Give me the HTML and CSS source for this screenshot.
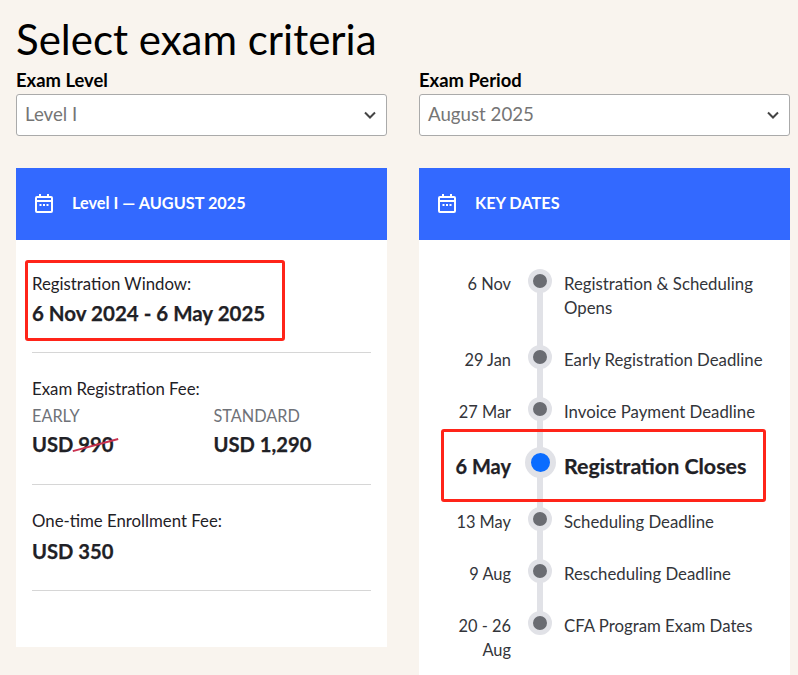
FILE: index.html
```html
<!DOCTYPE html>
<html lang="en">
<head>
<meta charset="utf-8">
<title>Select exam criteria</title>
<link rel="stylesheet" href="styles.css">
</head>
<body>
<main class="page">
  <h1 class="title">Select exam criteria</h1>
  <div class="columns">
    <div class="col">
      <div class="field">
        <div class="field-label">Exam Level</div>
        <div class="select"><span>Level I</span>
          <svg class="chevron" viewBox="0 0 12 8"><path d="M1 1.5 6 6.5 11 1.5"/></svg>
        </div>
      </div>
      <section class="card card-left">
        <header class="card-head">
          <svg class="cal" viewBox="0 0 20 20"><rect x="2" y="4" width="16" height="15" rx="1"/><path d="M2 8h16M6 1v3M14 1v3"/><path class="dots" d="M5.5 12h2M9 12h2M12.5 12h2"/></svg>
          <span>Level I — AUGUST 2025</span>
        </header>
        <div class="info info-first">
          <div class="info-label">Registration Window:</div>
          <div class="info-value">6 Nov 2024 - 6 May 2025</div>
        </div>
        <div class="info">
          <div class="info-label">Exam Registration Fee:</div>
          <div class="fees">
            <div>
              <div class="fee-kind">EARLY</div>
              <div class="info-value fee-value">USD <span class="struck">990</span></div>
            </div>
            <div>
              <div class="fee-kind">STANDARD</div>
              <div class="info-value fee-value">USD 1,290</div>
            </div>
          </div>
        </div>
        <div class="info">
          <div class="info-label">One-time Enrollment Fee:</div>
          <div class="info-value fee-total">USD 350</div>
        </div>
        <div class="mark mark-window"></div>
      </section>
    </div>
    <div class="col">
      <div class="field">
        <div class="field-label">Exam Period</div>
        <div class="select"><span>August 2025</span>
          <svg class="chevron" viewBox="0 0 12 8"><path d="M1 1.5 6 6.5 11 1.5"/></svg>
        </div>
      </div>
      <section class="card card-right">
        <header class="card-head">
          <svg class="cal" viewBox="0 0 20 20"><rect x="2" y="4" width="16" height="15" rx="1"/><path d="M2 8h16M6 1v3M14 1v3"/><path class="dots" d="M5.5 12h2M9 12h2M12.5 12h2"/></svg>
          <span>KEY DATES</span>
        </header>
        <ol class="timeline">
          <li class="row"><div class="date">6 Nov</div><div class="dot"></div><div class="what">Registration &amp; Scheduling Opens</div></li>
          <li class="row"><div class="date">29 Jan</div><div class="dot"></div><div class="what">Early Registration Deadline</div></li>
          <li class="row"><div class="date">27 Mar</div><div class="dot"></div><div class="what">Invoice Payment Deadline</div></li>
          <li class="row row-key"><div class="date">6 May</div><div class="dot"></div><div class="what">Registration Closes</div></li>
          <li class="row"><div class="date">13 May</div><div class="dot"></div><div class="what">Scheduling Deadline</div></li>
          <li class="row"><div class="date">9 Aug</div><div class="dot"></div><div class="what">Rescheduling Deadline</div></li>
          <li class="row"><div class="date">20 - 26 Aug</div><div class="dot"></div><div class="what">CFA Program Exam Dates</div></li>
        </ol>
        <div class="mark mark-closes"></div>
      </section>
    </div>
  </div>
</main>
</body>
</html>
```

FILE: styles.css
```css
* { box-sizing: border-box; }
html, body { margin: 0; height: 100%; }
body {
  background: #f9f4ee;
  color: #1f2126;
  font-family: Lato, "Open Sans", sans-serif;
  overflow: hidden;
}
.page { padding: 16px 8px 0 16px; }
.title {
  margin: 0;
  font-size: 42px;
  font-weight: 400;
  line-height: 46px;
  height: 48px;
  color: #000;
}
.columns {
  display: grid;
  grid-template-columns: 371px 371px;
  column-gap: 32px;
}
.field-label {
  font-size: 18.4px;
  font-weight: 700;
  line-height: 32px;
  height: 30px;
  color: #000;
}
.select {
  height: 42px;
  background: #fff;
  border: 1px solid #aaa;
  border-radius: 3px;
  padding: 0 10px 2px 8px;
  display: flex;
  align-items: center;
  justify-content: space-between;
  font-size: 18.7px;
  color: #757575;
}
.chevron { width: 12px; height: 8px; margin-top: 2px; fill: none; stroke: #444; stroke-width: 2; }
.card {
  position: relative;
  margin-top: 32px;
  background: #fff;
}
.card-left { height: 479px; }
.card-right { height: 520px; }
.card-head {
  height: 72px;
  background: #3369ff;
  color: #fff;
  display: flex;
  align-items: center;
  gap: 18px;
  padding-left: 18px;
  font-size: 16.3px;
  font-weight: 700;
}
.card-head span { margin-bottom: 3px; }
.cal { width: 20px; height: 20px; margin-bottom: 2px; fill: none; stroke: #fff; stroke-width: 2; }
.info {
  margin: 0 16px;
  padding: 24px 0 25px;
  border-bottom: 1px solid #d6d6d6;
}
.info-first { padding: 32px 0 24px; }
.info-label { font-size: 16.8px; line-height: 24px; }
.info-value { font-size: 20.5px; font-weight: 700; line-height: 30px; margin-top: 2px; -webkit-text-stroke: 0.25px currentColor; }
.fee-value { margin-top: 1px; font-size: 20.2px; }
.fee-total { font-size: 20.2px; margin-top: 3px; margin-bottom: -1px; }
.fees { display: grid; grid-template-columns: 181.5px 1fr; margin-top: 3px; }
.fee-kind { font-size: 16.3px; line-height: 24px; color: #6f7278; }
.struck { position: relative; }
.struck::after {
  content: "";
  position: absolute;
  left: -6px;
  right: -6px;
  top: 50%;
  height: 2px;
  background: #c9314f;
  transform: rotate(-15deg);
}
.mark {
  position: absolute;
  border: 3px solid #ff2419;
  border-radius: 3px;
  pointer-events: none;
}
.mark-window { left: 9px; top: 92px; width: 260px; height: 81px; }
.mark-closes { left: 22px; top: 261px; width: 325px; height: 73px; }
.timeline {
  position: relative;
  list-style: none;
  margin: 0;
  padding: 31px 16px 0 22px;
}
.timeline::before {
  content: "";
  position: absolute;
  left: 118px;
  top: 40px;
  height: 345px;
  width: 6px;
  background: #e1e2e7;
}
.row {
  position: relative;
  display: grid;
  grid-template-columns: 70px 53px 1fr;
  font-size: 16.4px;
  line-height: 24px;
  color: #33353a;
  margin-bottom: 28px;
}
.what { font-size: 16.8px; padding-top: 1px; margin-bottom: -1px; }
.date { text-align: right; padding-top: 1px; margin-bottom: -1px; }
.dot {
  width: 24px;
  height: 24px;
  margin: -2px 0 0 17px;
  border-radius: 50%;
  background: #6a6c72;
  border: 5.5px solid #e1e2e7;
}
.row-key {
  font-size: 20px;
  line-height: 30px;
  font-weight: 700;
  color: #1f2126;
}
.row-key .what { font-size: 21.4px; padding-top: 0; margin-bottom: 0; -webkit-text-stroke: 0.25px currentColor; }
.row-key .date { padding-top: 0; margin-bottom: 0; -webkit-text-stroke: 0.25px currentColor; }
.row-key .dot {
  width: 31px;
  height: 31px;
  margin: -4px 0 0 13.5px;
  background: #0a6cff;
  border-width: 6px;
}
```
